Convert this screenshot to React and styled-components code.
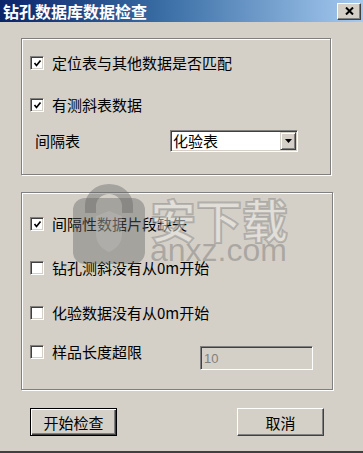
import React from 'react';
import styled, { createGlobalStyle, css } from 'styled-components';

const Global = createGlobalStyle`
  html, body { margin: 0; padding: 0; }
  body {
    width: 363px; height: 453px; overflow: hidden; background: #d4d0c8;
    font-family: "Noto Sans CJK SC", "Noto Sans", sans-serif;
  }
`;

const Window = styled.div`
  position: relative;
  width: 363px;
  height: 453px;
  box-sizing: border-box;
  background: #d4d0c8;
  border-bottom: 2px solid #404040;
  display: flex;
  flex-direction: column;
`;

const TitleBar = styled.div`
  height: 22px;
  flex-shrink: 0;
  display: flex;
  align-items: center;
  justify-content: space-between;
  background: linear-gradient(to right, #0a246a 0%, #3a6ea5 45%, #a6caf0 100%);
  padding: 0 2px 0 3px;
`;

const Title = styled.span`
  color: #fff;
  font-weight: 700;
  font-size: 16px;
  line-height: 22px;
`;

const CloseBtn = styled.div`
  width: 24px;
  height: 17px;
  box-sizing: border-box;
  background: #d4d0c8;
  border: 1px solid;
  border-color: #fff #404040 #404040 #fff;
  box-shadow: inset -1px -1px 0 #808080;
  display: flex;
  align-items: center;
  justify-content: center;
`;

const Body = styled.div`
  display: flex;
  flex-direction: column;
  padding: 16px 0 0 21px;
`;

const Group = styled.div`
  box-sizing: border-box;
  width: ${p => p.$w}px;
  margin-top: ${p => p.$mt || 0}px;
  border: 1px solid #808080;
  box-shadow: 1px 1px 0 #fff, inset 1px 1px 0 #fff;
  padding: ${p => p.$pad};
  display: flex;
  flex-direction: column;
`;

const Row = styled.div`
  display: flex;
  align-items: ${p => p.$align || 'center'};
  min-height: 22px;
  margin-top: ${p => p.$mt || 0}px;
  padding-left: ${p => (p.$pl == null ? 8 : p.$pl)}px;
`;

const CheckWrap = styled.span`
  height: 22px;
  display: flex;
  align-items: center;
`;

const Box = styled.span`
  width: 14px;
  height: 14px;
  box-sizing: border-box;
  background: #fff;
  border: 1px solid;
  border-color: #808080 #fff #fff #808080;
  box-shadow: inset 1px 1px 0 #404040, inset -1px -1px 0 #d4d0c8;
  display: flex;
  align-items: center;
  justify-content: center;
  flex-shrink: 0;
`;

const Label = styled.span`
  font-size: 15px;
  line-height: 22px;
  color: #000;
  margin-left: ${p => p.$ml || 0}px;
  ${p => p.$w && css`width: ${p.$w}px; flex-shrink: 0;`}
  white-space: nowrap;
`;

const Select = styled.div`
  width: 128px;
  height: 22px;
  box-sizing: border-box;
  background: #fff;
  border: 1px solid;
  border-color: #808080 #fff #fff #808080;
  box-shadow: inset 1px 1px 0 #404040, inset -1px -1px 0 #d4d0c8;
  display: flex;
  align-items: center;
  padding: 1px 1px 1px 2px;
`;

const SelectText = styled.span`
  flex: 1;
  font-size: 15px;
  line-height: 18px;
  color: #000;
`;

const DropBtn = styled.span`
  width: 16px;
  height: 18px;
  box-sizing: border-box;
  background: #d4d0c8;
  border: 1px solid;
  border-color: #d4d0c8 #404040 #404040 #d4d0c8;
  box-shadow: inset 1px 1px 0 #fff, inset -1px -1px 0 #808080;
  display: flex;
  align-items: center;
  justify-content: center;
`;

const TextBox = styled.div`
  width: 113px;
  height: 24px;
  box-sizing: border-box;
  margin-top: 5px;
  background: #d4d0c8;
  border: 1px solid;
  border-color: #808080 #fff #fff #808080;
  box-shadow: inset 1px 1px 0 #404040, inset -1px -1px 0 #d4d0c8;
  display: flex;
  align-items: center;
  padding-left: 3px;
  font-family: "Liberation Sans", Arial, sans-serif;
  font-size: 13px;
  color: #808080;
`;

const ButtonRow = styled.div`
  display: flex;
  gap: 120px;
  margin-top: 18px;
  padding-left: 9px;
`;

const Button = styled.div`
  width: 87px;
  height: 28px;
  box-sizing: border-box;
  background: #d4d0c8;
  font-size: 15px;
  color: #000;
  display: flex;
  align-items: center;
  justify-content: center;
  border: 1px solid;
  border-color: #fff #404040 #404040 #fff;
  box-shadow: inset -1px -1px 0 #808080;
  ${p => p.$default && css`
    border-color: #000;
    box-shadow: inset 1px 1px 0 #fff, inset -1px -1px 0 #404040, inset -2px -2px 0 #808080;
  `}
`;

const Watermark = styled.div`
  position: absolute;
  left: 73px;
  top: 183px;
  width: 220px;
  height: 82px;
  pointer-events: none;
  display: flex;
  align-items: flex-start;
  gap: 5px;
`;

const LockBox = styled.div`
  width: 72px;
  height: 82px;
  flex-shrink: 0;
`;

const WmText = styled.div`
  display: flex;
  flex-direction: column;
  align-items: flex-start;
  margin-top: 12px;
  flex-shrink: 0;
`;

const WmBig = styled.div`
  font-family: "Noto Sans CJK SC", sans-serif;
  font-weight: 700;
  font-size: 46px;
  line-height: 46px;
  white-space: nowrap;
  color: rgba(240, 238, 235, 0.5);
  -webkit-text-stroke: 2px rgba(100, 100, 100, 0.35);
`;

const WmSmall = styled.div`
  font-family: "Liberation Sans", Arial, sans-serif;
  font-size: 32px;
  line-height: 24px;
  margin-top: -3px;
  white-space: nowrap;
  color: rgba(100, 100, 100, 0.38);
`;

const Check = () => (
  <svg width="9" height="9" viewBox="0 0 9 9">
    <polyline points="1.5,4 3.5,6.5 7.5,1.5" fill="none" stroke="#000" strokeWidth="1.7" />
  </svg>
);

const CheckBox = ({ checked }) => (
  <CheckWrap>
    <Box>{checked && <Check />}</Box>
  </CheckWrap>
);

const Lock = () => (
  <svg width="72" height="82" viewBox="0 0 72 82" style={{ display: 'block' }}>
    <path d="M12 22 A24 21 0 0 1 60 22 L60 30 L49 30 L49 23 A13 12 0 0 0 23 23 L23 30 L12 30 Z"
      fill="rgba(100,100,100,0.42)" />
    <rect x="0" y="15" width="72" height="66" rx="12" fill="rgba(100,100,100,0.42)" />
    <path d="M23 33 L36 28 L49 33 L49 51 Q49 63 36 69 Q23 63 23 51 Z" fill="rgba(200,198,194,0.3)" />
  </svg>
);

export default function App() {
  return (
    <>
      <Global />
      <Window>
        <TitleBar>
          <Title>钻孔数据库数据检查</Title>
          <CloseBtn>
            <svg width="9" height="8" viewBox="0 0 9 8">
              <path d="M1 0.5 L8 7.5 M8 0.5 L1 7.5" stroke="#000" strokeWidth="2" />
            </svg>
          </CloseBtn>
        </TitleBar>
        <Body>
          <Group $w={310} $pad="13px 0 22px 0">
            <Row>
              <CheckBox checked />
              <Label $ml={8}>定位表与其他数据是否匹配</Label>
            </Row>
            <Row $mt={20}>
              <CheckBox checked />
              <Label $ml={8}>有测斜表数据</Label>
            </Row>
            <Row $mt={14} $pl={13}>
              <Label $w={135}>间隔表</Label>
              <Select>
                <SelectText>化验表</SelectText>
                <DropBtn>
                  <svg width="7" height="4" viewBox="0 0 7 4">
                    <path d="M0 0 L7 0 L3.5 4 Z" fill="#000" />
                  </svg>
                </DropBtn>
              </Select>
            </Row>
          </Group>
          <Group $w={312} $mt={17} $pad="20px 0 19px 0">
            <Row>
              <CheckBox checked />
              <Label $ml={8}>间隔性数据片段缺失</Label>
            </Row>
            <Row $mt={22}>
              <CheckBox />
              <Label $ml={8}>钻孔测斜没有从0m开始</Label>
            </Row>
            <Row $mt={23}>
              <CheckBox />
              <Label $ml={8}>化验数据没有从0m开始</Label>
            </Row>
            <Row $mt={17} $align="flex-start">
              <CheckBox />
              <Label $ml={8} $w={148}>样品长度超限</Label>
              <TextBox>10</TextBox>
            </Row>
          </Group>
          <ButtonRow>
            <Button $default>开始检查</Button>
            <Button>取消</Button>
          </ButtonRow>
        </Body>
        <Watermark>
          <LockBox><Lock /></LockBox>
          <WmText>
            <WmBig>安下载</WmBig>
            <WmSmall>anxz.com</WmSmall>
          </WmText>
        </Watermark>
      </Window>
    </>
  );
}
